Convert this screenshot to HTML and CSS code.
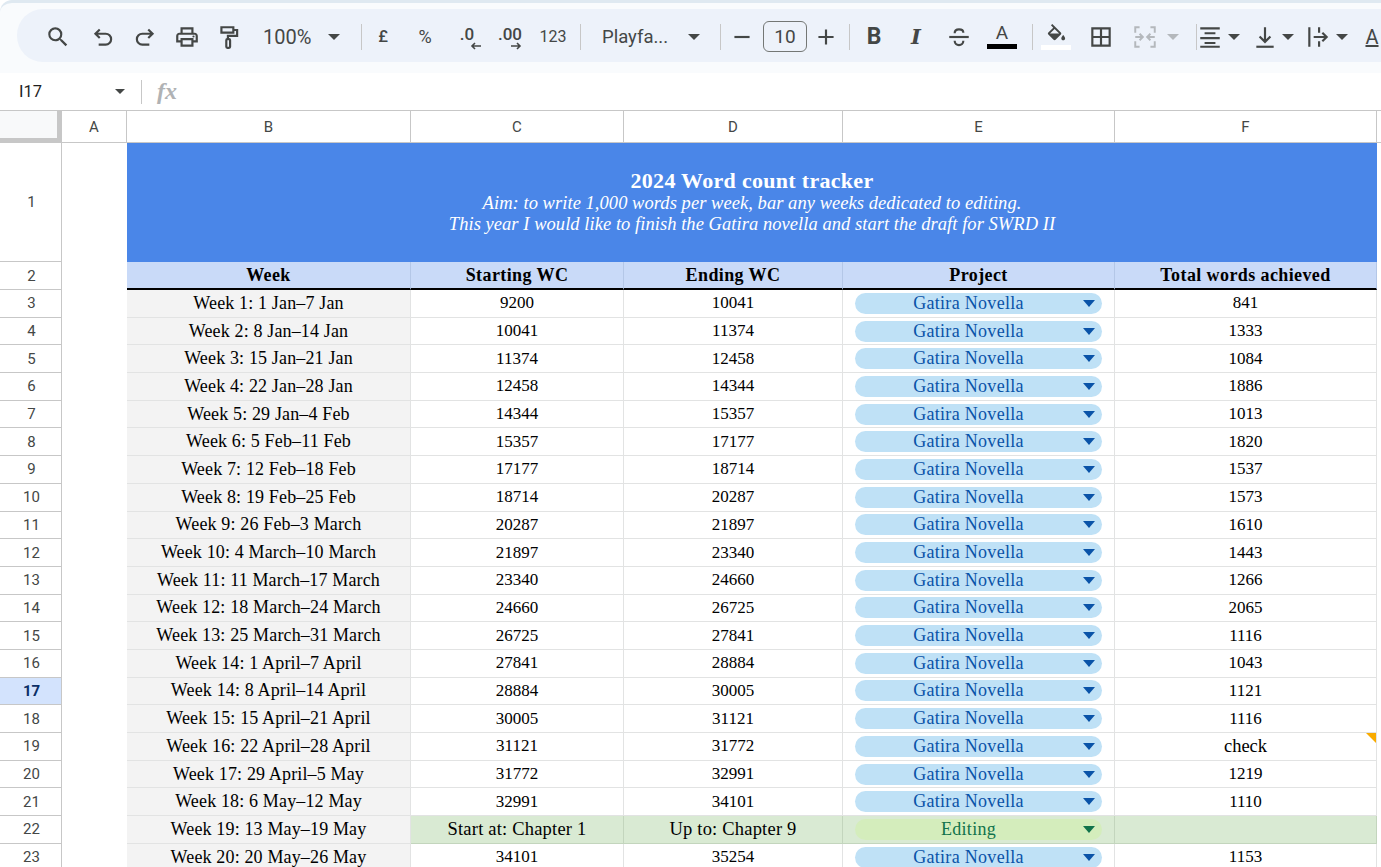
FILE: index.html
```html
<!DOCTYPE html>
<html lang="en">
<head>
<meta charset="utf-8">
<title>2024 Word count tracker</title>
<link rel="stylesheet" href="styles.css">
</head>
<body>
<div class="app">
  <div class="topband">
    <div class="pill">
      <span class="tb w42"><svg viewBox="0 0 24 24" class="ic"><path d="M15.5 14h-.79l-.28-.27A6.47 6.47 0 0 0 16 9.5 6.5 6.5 0 1 0 9.5 16c1.61 0 3.09-.59 4.23-1.57l.27.28v.79l5 4.99L20.49 19l-4.99-5zm-6 0C7.01 14 5 11.99 5 9.5S7.01 5 9.5 5 14 7.01 14 9.5 11.99 14 9.5 14z"/></svg></span>
      <span class="tb w42 ml3"><svg viewBox="0 0 24 24" class="ic"><path class="ln" d="M9 5 5 9l4 4M5 9h9.5a4.5 4.5 0 0 1 0 10H8"/></svg></span>
      <span class="tb w42"><svg viewBox="0 0 24 24" class="ic"><path class="ln" d="m15 5 4 4-4 4M19 9H9.5a4.5 4.5 0 0 0 0 10H16"/></svg></span>
      <span class="tb w42"><svg viewBox="0 0 24 24" class="ic"><path d="M19 8h-1V3H6v5H5c-1.66 0-3 1.34-3 3v6h4v4h12v-4h4v-6c0-1.66-1.34-3-3-3zM8 5h8v3H8V5zm8 14H8v-4h8v4zm4-4h-2v-2H6v2H4v-4c0-.55.45-1 1-1h14c.55 0 1 .45 1 1v4z"/><circle cx="18" cy="11.5" r="1"/></svg></span>
      <span class="tb w42"><svg viewBox="0 0 24 24" class="ic"><path class="ln" d="M5 3h11v5H5zM16 5.5h3.5V11H11v3"/><rect class="ln" x="9.5" y="14" width="3.5" height="8" rx="1"/></svg></span>
      <span class="tb zoomval">100%</span>
      <span class="tb w24"><i class="caret"></i></span>
      <i class="sep ml15"></i>
      <span class="tb w42 sym">£</span>
      <span class="tb w42 sym pct">%</span>
      <span class="tb w42 dec"><span class="dec-in">.0<svg viewBox="0 0 12 8" class="arr out"><path class="ln2" d="M11 4H2M5 1 2 4l3 3"/></svg></span></span>
      <span class="tb w42 ml1 dec"><span class="dec-in">.00<svg viewBox="0 0 12 8" class="arr"><path class="ln2" d="M1 4h9M7 1l3 3-3 3"/></svg></span></span>
      <span class="tb w42 ml1 num">123</span>
      <i class="sep ml6"></i>
      <span class="tb fontname">Playfa...</span>
      <span class="tb w24 ml12"><i class="caret"></i></span>
      <i class="sep ml14"></i>
      <span class="tb w42"><svg viewBox="0 0 24 24" class="ic"><path d="M5 11h14v2H5z"/></svg></span>
      <span class="sizebox">10</span>
      <span class="tb w38"><svg viewBox="0 0 24 24" class="ic"><path d="M11 5h2v6h6v2h-6v6h-2v-6H5v-2h6z"/></svg></span>
      <i class="sep ml4"></i>
      <span class="tb w42 ml3 fmt bold">B</span>
      <span class="tb w42 fmt ital">I</span>
      <span class="tb w42 ml1"><svg viewBox="0 0 24 24" class="ic"><path d="M3 11h18v2H3z"/><path class="ln" d="M8 8.5C8 6 10 5 12 5s4 1 4 3M8 15.5C8 18 10 19.5 12 19.5s4-1.5 4-4"/></svg></span>
      <span class="tb w42 ml1 color"><span class="color-a">A</span><i class="bar black"></i></span>
      <i class="sep ml9"></i>
      <span class="tb w42 ml2 color"><svg viewBox="0 0 24 24" class="ic fill"><path d="M16.56 8.94 7.62 0 6.21 1.41l2.38 2.38-5.15 5.15a1.49 1.49 0 0 0 0 2.12l5.5 5.5c.29.29.68.44 1.06.44s.77-.15 1.06-.44l5.5-5.5c.59-.58.59-1.53 0-2.12zM5.21 10 10 5.21 14.79 10H5.21zM19 11.5s-2 2.17-2 3.5c0 1.1.9 2 2 2s2-.9 2-2c0-1.33-2-3.5-2-3.5z"/></svg><i class="bar white"></i></span>
      <span class="tb w42 ml3"><svg viewBox="0 0 24 24" class="ic"><path d="M3 3v18h18V3H3zm8 16H5v-6h6v6zm0-8H5V5h6v6zm8 8h-6v-6h6v6zm0-8h-6V5h6v6z"/></svg></span>
      <span class="tb w42 ml2 off"><svg viewBox="0 0 24 24" class="ic"><path class="ln" d="M7 3H3v5M17 3h4v5M7 21H3v-5M17 21h4v-5M3 12h7M7 9l3 3-3 3M21 12h-7M17 9l-3 3 3 3"/></svg></span>
      <span class="tb w14"><i class="caret light"></i></span>
      <i class="sep ml16"></i>
      <span class="tb w26"><svg viewBox="0 0 24 24" class="ic"><path d="M3 3h18v2H3zM7 7.5h10v2H7zM3 12h18v2H3zM7 16.5h10v2H7zM3 20h18v2H3z"/></svg></span>
      <span class="tb w22"><i class="caret"></i></span>
      <span class="tb w26 ml7"><svg viewBox="0 0 24 24" class="ic"><path d="M4 20h16v2H4z"/><path class="ln" d="M12 3v13M7 11.5l5 5 5-5"/></svg></span>
      <span class="tb w22 mln1"><i class="caret"></i></span>
      <span class="tb w26 ml6"><svg viewBox="0 0 24 24" class="ic"><path d="M3 3h2v18H3zM12 3h2v5h-2zM12 16h2v5h-2z"/><path class="ln" d="M8 12h12M16 8l4 4-4 4"/></svg></span>
      <span class="tb w22"><i class="caret"></i></span>
      <span class="tb w26 ml6 rot">A</span>
    </div>
  </div>

  <div class="fbar">
    <span class="namebox">I17</span>
    <i class="caret small"></i>
    <i class="sep fsep"></i>
    <span class="fx">fx</span>
  </div>

  <div class="sheet">
    <div class="corner"></div><div class="ch">A</div><div class="ch">B</div><div class="ch">C</div><div class="ch">D</div><div class="ch">E</div><div class="ch">F</div><div class="ch none"></div>

    <div class="rh r1">1</div><div class="blank r1"></div>
    <div class="title r1"><strong>2024 Word count tracker</strong><em>Aim: to write 1,000 words per week, bar any weeks dedicated to editing.</em><em>This year I would like to finish the Gatira novella and start the draft for SWRD II</em></div>
    <div class="blank r1"></div>

    <div class="rh r2">2</div><div class="blank r2"></div><div class="hd r2">Week</div><div class="hd r2">Starting WC</div><div class="hd r2">Ending WC</div><div class="hd r2">Project</div><div class="hd r2">Total words achieved</div><div class="blank r2"></div>

    <div class="rh">3</div><div class="blank"></div><div class="wk">Week 1: 1 Jan–7 Jan</div><div class="c">9200</div><div class="c">10041</div><div class="c"><span class="chip"><span class="chip-t">Gatira Novella</span></span></div><div class="c">841</div><div class="blank"></div>
    <div class="rh">4</div><div class="blank"></div><div class="wk">Week 2: 8 Jan–14 Jan</div><div class="c">10041</div><div class="c">11374</div><div class="c"><span class="chip"><span class="chip-t">Gatira Novella</span></span></div><div class="c">1333</div><div class="blank"></div>
    <div class="rh">5</div><div class="blank"></div><div class="wk">Week 3: 15 Jan–21 Jan</div><div class="c">11374</div><div class="c">12458</div><div class="c"><span class="chip"><span class="chip-t">Gatira Novella</span></span></div><div class="c">1084</div><div class="blank"></div>
    <div class="rh">6</div><div class="blank"></div><div class="wk">Week 4: 22 Jan–28 Jan</div><div class="c">12458</div><div class="c">14344</div><div class="c"><span class="chip"><span class="chip-t">Gatira Novella</span></span></div><div class="c">1886</div><div class="blank"></div>
    <div class="rh">7</div><div class="blank"></div><div class="wk">Week 5: 29 Jan–4 Feb</div><div class="c">14344</div><div class="c">15357</div><div class="c"><span class="chip"><span class="chip-t">Gatira Novella</span></span></div><div class="c">1013</div><div class="blank"></div>
    <div class="rh">8</div><div class="blank"></div><div class="wk">Week 6: 5 Feb–11 Feb</div><div class="c">15357</div><div class="c">17177</div><div class="c"><span class="chip"><span class="chip-t">Gatira Novella</span></span></div><div class="c">1820</div><div class="blank"></div>
    <div class="rh">9</div><div class="blank"></div><div class="wk">Week 7: 12 Feb–18 Feb</div><div class="c">17177</div><div class="c">18714</div><div class="c"><span class="chip"><span class="chip-t">Gatira Novella</span></span></div><div class="c">1537</div><div class="blank"></div>
    <div class="rh">10</div><div class="blank"></div><div class="wk">Week 8: 19 Feb–25 Feb</div><div class="c">18714</div><div class="c">20287</div><div class="c"><span class="chip"><span class="chip-t">Gatira Novella</span></span></div><div class="c">1573</div><div class="blank"></div>
    <div class="rh">11</div><div class="blank"></div><div class="wk">Week 9: 26 Feb–3 March</div><div class="c">20287</div><div class="c">21897</div><div class="c"><span class="chip"><span class="chip-t">Gatira Novella</span></span></div><div class="c">1610</div><div class="blank"></div>
    <div class="rh">12</div><div class="blank"></div><div class="wk">Week 10: 4 March–10 March</div><div class="c">21897</div><div class="c">23340</div><div class="c"><span class="chip"><span class="chip-t">Gatira Novella</span></span></div><div class="c">1443</div><div class="blank"></div>
    <div class="rh">13</div><div class="blank"></div><div class="wk">Week 11: 11 March–17 March</div><div class="c">23340</div><div class="c">24660</div><div class="c"><span class="chip"><span class="chip-t">Gatira Novella</span></span></div><div class="c">1266</div><div class="blank"></div>
    <div class="rh">14</div><div class="blank"></div><div class="wk">Week 12: 18 March–24 March</div><div class="c">24660</div><div class="c">26725</div><div class="c"><span class="chip"><span class="chip-t">Gatira Novella</span></span></div><div class="c">2065</div><div class="blank"></div>
    <div class="rh">15</div><div class="blank"></div><div class="wk">Week 13: 25 March–31 March</div><div class="c">26725</div><div class="c">27841</div><div class="c"><span class="chip"><span class="chip-t">Gatira Novella</span></span></div><div class="c">1116</div><div class="blank"></div>
    <div class="rh">16</div><div class="blank"></div><div class="wk">Week 14: 1 April–7 April</div><div class="c">27841</div><div class="c">28884</div><div class="c"><span class="chip"><span class="chip-t">Gatira Novella</span></span></div><div class="c">1043</div><div class="blank"></div>
    <div class="rh sel">17</div><div class="blank"></div><div class="wk">Week 14: 8 April–14 April</div><div class="c">28884</div><div class="c">30005</div><div class="c"><span class="chip"><span class="chip-t">Gatira Novella</span></span></div><div class="c">1121</div><div class="blank"></div>
    <div class="rh">18</div><div class="blank"></div><div class="wk">Week 15: 15 April–21 April</div><div class="c">30005</div><div class="c">31121</div><div class="c"><span class="chip"><span class="chip-t">Gatira Novella</span></span></div><div class="c">1116</div><div class="blank"></div>
    <div class="rh">19</div><div class="blank"></div><div class="wk">Week 16: 22 April–28 April</div><div class="c">31121</div><div class="c">31772</div><div class="c"><span class="chip"><span class="chip-t">Gatira Novella</span></span></div><div class="c note">check</div><div class="blank"></div>
    <div class="rh">20</div><div class="blank"></div><div class="wk">Week 17: 29 April–5 May</div><div class="c">31772</div><div class="c">32991</div><div class="c"><span class="chip"><span class="chip-t">Gatira Novella</span></span></div><div class="c">1219</div><div class="blank"></div>
    <div class="rh">21</div><div class="blank"></div><div class="wk">Week 18: 6 May–12 May</div><div class="c">32991</div><div class="c">34101</div><div class="c"><span class="chip"><span class="chip-t">Gatira Novella</span></span></div><div class="c">1110</div><div class="blank"></div>
    <div class="rh">22</div><div class="blank"></div><div class="wk">Week 19: 13 May–19 May</div><div class="c green">Start at: Chapter 1</div><div class="c green">Up to: Chapter 9</div><div class="c green"><span class="chip edit"><span class="chip-t">Editing</span></span></div><div class="c green"></div><div class="blank"></div>
    <div class="rh">23</div><div class="blank"></div><div class="wk">Week 20: 20 May–26 May</div><div class="c">34101</div><div class="c">35254</div><div class="c"><span class="chip"><span class="chip-t">Gatira Novella</span></span></div><div class="c">1153</div><div class="blank"></div>
  </div>
</div>
</body>
</html>
```
FILE: styles.css
```css
* { box-sizing: border-box; }
html, body { margin: 0; padding: 0; height: 100%; overflow: hidden; background: #fff; }
body { font-family: "Liberation Serif", serif; color: #000; }
.app { width: 1381px; height: 867px; overflow: hidden; display: flex; flex-direction: column; }

/* toolbar */
.topband { height: 73px; flex: none; background: #f9fbfd; border-top: 3px solid #dfe9f1; border-radius: 12px 0 0 0; padding: 6px 0 0 17px; }
.pill { width: 1500px; height: 53px; background: #edf2fa; border-radius: 26px; padding: 2px 0 0 20px; display: flex; align-items: center; font-family: Roboto, sans-serif; color: #444746; }
.tb { display: flex; align-items: center; justify-content: center; flex: none; height: 40px; }
.w42 { width: 42px; } .w38 { width: 38px; } .w26 { width: 26px; } .w24 { width: 24px; } .w22 { width: 22px; } .w14 { width: 14px; }
.ml1 { margin-left: 1px; } .ml2 { margin-left: 2px; } .ml3 { margin-left: 3px; } .ml4 { margin-left: 4px; } .ml6 { margin-left: 6px; } .ml7 { margin-left: 7px; } .ml9 { margin-left: 9px; } .ml12 { margin-left: 12px; } .ml14 { margin-left: 14px; } .ml15 { margin-left: 15px; } .ml16 { margin-left: 16px; } .mln1 { margin-left: -1px; }
.ic { width: 26px; height: 26px; fill: #444746; }
.ln { fill: none; stroke: #444746; stroke-width: 2; }
.ln2 { fill: none; stroke: #444746; stroke-width: 1.6; }
.off .ln { stroke: #b4b8bc; stroke-width: 1.8; }
.caret { display: block; width: 0; height: 0; border-left: 6px solid transparent; border-right: 6px solid transparent; border-top: 6px solid #444746; }
.caret.light { border-top-color: #b4b8bc; }
.caret.small { border-left-width: 5.5px; border-right-width: 5.5px; border-top-width: 5.5px; margin-left: 1px; }
.sep { display: block; width: 1px; height: 26px; background: #c7c7c7; flex: none; }
.zoomval { width: 72px; justify-content: flex-start; padding-left: 13px; font-size: 20px; }
.sym { font-size: 16.5px; font-weight: 500; }
.pct { font-size: 18px; font-weight: 400; }
.dec { font-size: 17px; font-weight: 500; }
.dec-in { position: relative; display: block; line-height: 20px; top: -3px; }
.arr { position: absolute; right: 0; top: 18px; width: 12px; height: 8px; }
.arr.out { right: -8px; }
.num { font-size: 16px; }
.fontname { width: 76px; justify-content: flex-start; padding-left: 8px; font-size: 18.5px; margin-left: 13px; }
.sizebox { width: 44px; height: 31px; flex: none; border: 1px solid #747775; border-radius: 6px; display: flex; align-items: center; justify-content: center; font-size: 19px; }
.fmt { font-size: 21px; }
.bold { font-weight: 700; font-size: 23px; }
.ital { font-style: italic; font-weight: 700; font-family: "DejaVu Serif", serif; font-size: 21px; }
.color { flex-direction: column; justify-content: center; position: relative; }
.color-a { font-size: 19px; line-height: 18px; }
.bar { display: block; width: 30px; height: 5px; margin-top: 2px; }
.bar.black { background: #000; }
.bar.white { background: #fff; margin-top: -2px; }
.ic.fill { width: 23px; height: 23px; }
.rot { font-size: 20px; text-decoration: underline; }

/* formula bar */
.fbar { height: 38px; flex: none; background: #fff; border-bottom: 1px solid #c7c7c7; display: flex; align-items: center; color: #444746; position: relative; }
.namebox { width: 114px; padding-left: 19px; font-family: Roboto, sans-serif; font-size: 16.5px; color: #1f1f1f; }
.fsep { margin-left: 16px; height: 24px; }
.fx { margin-left: 15px; font-family: "Liberation Serif", serif; font-style: italic; font-weight: 700; font-size: 24px; color: #b0b2b4; }

/* sheet grid */
.sheet { display: grid; grid-template-columns: 62px 65px 284px 213px 219px 272px 262px 4px; grid-template-rows: 32px 119px 28px; grid-auto-rows: 27.7px; }
.corner { background: #f8f9fa; border-right: 5px solid #c7c7c7; border-bottom: 5px solid #c7c7c7; }
.ch { font-family: Roboto, sans-serif; font-size: 15px; color: #444746; display: flex; align-items: center; justify-content: center; border-right: 1px solid #c7c7c7; border-bottom: 1px solid #c7c7c7; background: #fff; }
.ch.none { border-right: 0; }
.rh { font-family: Roboto, sans-serif; font-size: 15px; color: #444746; display: flex; align-items: center; justify-content: center; border-right: 1px solid #c7c7c7; border-bottom: 1px solid #c7c7c7; background: #fff; padding-left: 2px; }
.rh.sel { background: #d3e3fd; color: #0b2f66; font-weight: 700; }
.blank { background: #fff; }
.title { grid-column: span 5; background: #4a86e8; color: #fff; display: flex; flex-direction: column; align-items: center; justify-content: center; padding-bottom: 2px; }
.title strong { font-size: 22px; line-height: 24px; letter-spacing: .3px; }
.title em { font-size: 18.5px; line-height: 21px; letter-spacing: .05px; }
.hd { background: #c9daf8; border-right: 1px solid #b4c7e7; border-bottom: 2px solid #000; display: flex; align-items: center; justify-content: center; font-weight: 700; font-size: 18px; letter-spacing: .4px; }
.wk, .c { font-size: 18px; letter-spacing: .15px; display: flex; align-items: center; justify-content: center; border-right: 1px solid #e2e3e3; border-bottom: 1px solid #e2e3e3; white-space: nowrap; }
.wk { background: #f3f3f3; }
.c { background: #fff; position: relative; font-size: 17px; letter-spacing: 0; }
.c.green { background: #d9ead3; border-color: #c3d5bd; font-size: 18.5px; letter-spacing: .2px; }
.chip { width: 247px; height: 21px; border-radius: 10.5px; background: #bfe1f6; color: #0a53a8; font-size: 18px; letter-spacing: .3px; display: flex; align-items: center; position: relative; }
.chip-t { flex: 1; text-align: center; padding-right: 20px; }
.chip::after { content: ""; position: absolute; right: 7px; top: 7px; width: 0; height: 0; border-left: 6px solid transparent; border-right: 6px solid transparent; border-top: 7px solid #0a53a8; }
.chip.edit { background: #d4edbc; color: #11734b; }
.chip.edit::after { border-top-color: #11734b; }
.note { font-size: 18.5px; }
.note::after { content: ""; position: absolute; right: 0; top: 0; width: 0; height: 0; border-top: 10px solid #f9ab00; border-left: 10px solid transparent; }
```
